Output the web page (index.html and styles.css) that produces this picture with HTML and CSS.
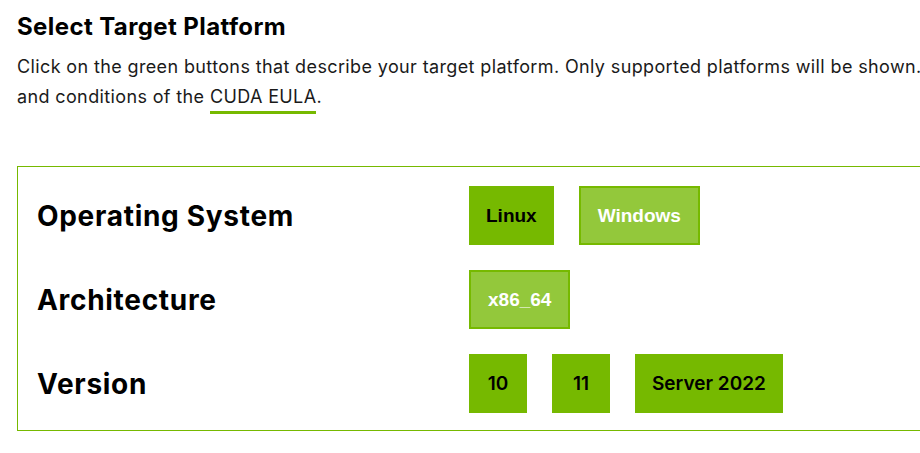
FILE: index.html
```html
<!DOCTYPE html>
<html lang="en">
<head>
<meta charset="UTF-8">
<meta name="viewport" content="width=device-width, initial-scale=1.0">
<title>Select Target Platform</title>
<link rel="stylesheet" href="styles.css">
</head>
<body>
<div class="page">
    <h2 class="title">Select Target Platform</h2>
    <p class="intro">Click on the green buttons that describe your target platform. Only supported platforms will be shown. By downloading and using the software, you agree to fully comply with the terms and conditions of the <a href="#" class="eula">CUDA EULA</a>.</p>

    <div class="selector">
        <div class="row">
            <div class="row-label">Operating System</div>
            <div class="row-buttons">
                <button class="opt">Linux</button>
                <button class="opt active">Windows</button>
            </div>
        </div>
        <div class="row">
            <div class="row-label">Architecture</div>
            <div class="row-buttons">
                <button class="opt active">x86_64</button>
            </div>
        </div>
        <div class="row">
            <div class="row-label">Version</div>
            <div class="row-buttons">
                <button class="opt nv">10</button>
                <button class="opt nv">11</button>
                <button class="opt nv">Server 2022</button>
            </div>
        </div>
    </div>
</div>
</body>
</html>
```

FILE: styles.css
```css
html, body {
    margin: 0;
    padding: 0;
    overflow: hidden;
    background-color: #ffffff;
}
body {
    font-family: Inter, "Noto Sans", sans-serif;
    color: #1a1a1a;
}
.page {
    width: 1658px;
    padding: 0 0 0 17px;
}
.title {
    font-size: 24px;
    font-weight: 700;
    letter-spacing: 0.4px;
    color: #000000;
    margin: 0;
    padding-top: 12px;
    line-height: 30px;
}
.intro {
    font-size: 18px;
    letter-spacing: 0.37px;
    line-height: 30px;
    margin: 10px 0 0 0;
    color: #1a1a1a;
}
.eula {
    color: #1a1a1a;
    text-decoration: none;
    border-bottom: 3px solid #76b900;
    padding-bottom: 4px;
}
.selector {
    margin-top: 54px;
    border: 1px solid #76b900;
    padding: 19px 19px 17px 19px;
    display: flex;
    flex-direction: column;
    gap: 25px;
}
.row {
    display: grid;
    grid-template-columns: 432px 1fr;
    align-items: center;
}
.row-label {
    font-size: 28px;
    font-weight: 700;
    letter-spacing: 0.7px;
    color: #000000;
}
.row-buttons {
    display: flex;
    gap: 25px;
}
.opt {
    height: 59px;
    padding: 0 17px;
    border: 0;
    background-color: #76b900;
    color: #000000;
    font-family: "Liberation Sans", Arial, sans-serif;
    font-size: 19px;
    font-weight: 700;
    cursor: pointer;
}
.opt.active {
    background-color: #93c83b;
    border: 2px solid #76b900;
    color: #ffffff;
}
.opt.nv {
    font-family: Inter, "Noto Sans", sans-serif;
    font-weight: 600;
    min-width: 58px;
    padding: 0 17px;
}
```
